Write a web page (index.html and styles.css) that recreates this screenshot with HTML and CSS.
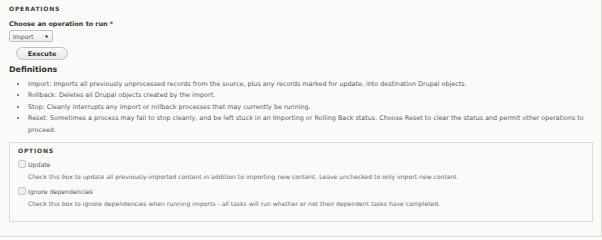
FILE: index.html
```html
<!DOCTYPE html>
<html>
<head>
<meta charset="utf-8">
<link rel="stylesheet" href="styles.css">
</head>
<body>
<div class="page">
  <div class="section-title">Operations</div>
  <div class="form-label">Choose an operation to run <span class="req">*</span></div>
  <div class="select"><span class="select-text">Import</span><span class="arrow">&#9660;</span></div>
  <div class="btn-row"><button class="btn">Execute</button></div>
  <h2 class="defs-title">Definitions</h2>
  <ul class="defs">
    <li>Import: Imports all previously unprocessed records from the source, plus any records marked for update, into destination Drupal objects.</li>
    <li>Rollback: Deletes all Drupal objects created by the import.</li>
    <li>Stop: Cleanly interrupts any import or rollback processes that may currently be running.</li>
    <li>Reset: Sometimes a process may fail to stop cleanly, and be left stuck in an Importing or Rolling Back status. Choose Reset to clear the status and permit other operations to proceed.</li>
  </ul>
  <div class="options">
    <div class="options-title">Options</div>
    <div class="opt">
      <div class="opt-row"><span class="cb"></span><span class="opt-label">Update</span></div>
      <div class="opt-desc">Check this box to update all previously-imported content in addition to importing new content. Leave unchecked to only import new content</div>
    </div>
    <div class="opt">
      <div class="opt-row"><span class="cb"></span><span class="opt-label">Ignore dependencies</span></div>
      <div class="opt-desc">Check this box to ignore dependencies when running imports - all tasks will run whether or not their dependent tasks have completed.</div>
    </div>
  </div>
</div>
</body>
</html>
```

FILE: styles.css
```css
html, body {
  margin: 0;
  padding: 0;
  background: #ffffff;
}
body {
  font-family: "DejaVu Sans", Verdana, sans-serif;
  color: #555;
}
.page {
  width: 602px;
  height: 237px;
  box-sizing: border-box;
  padding: 4px 9px 0 9px;
  background: #fafaf8;
  border-right: 1px solid #dcdcd8;
  border-bottom: 1px solid #dcdcd8;
  overflow: hidden;
}
.section-title {
  font-size: 6px;
  line-height: 10px;
  font-weight: bold;
  text-transform: uppercase;
  letter-spacing: 0.8px;
  color: #3a3a3a;
}
.form-label {
  margin-top: 5px;
  font-size: 6.4px;
  line-height: 10px;
  font-weight: bold;
  color: #333;
}
.req { color: #e0212a; }
.select {
  margin-top: 1px;
  width: 44px;
  height: 12px;
  box-sizing: border-box;
  border: 1px solid #c4c4c0;
  border-radius: 2px;
  background: linear-gradient(#fdfdfd, #ececea);
  display: flex;
  align-items: center;
  justify-content: space-between;
  padding: 0 4px 0 3px;
  font-size: 6.2px;
  color: #555;
}
.arrow { font-size: 4px; color: #333; }
.btn-row { margin-top: 5px; padding-left: 7px; }
.btn {
  display: block;
  width: 52px;
  height: 13px;
  padding: 0;
  border: 1px solid #c0c0bc;
  border-radius: 7px;
  background: linear-gradient(#fbfbfb, #e8e8e6);
  font-family: "DejaVu Sans", Verdana, sans-serif;
  font-size: 6.4px;
  font-weight: bold;
  color: #333;
}
.defs-title {
  margin: 4px 0 0 0;
  font-size: 7.9px;
  line-height: 12px;
  font-weight: bold;
  color: #333;
}
.defs {
  margin: 3px 0 0 0;
  padding: 0 0 0 19px;
  font-size: 6.4px;
  line-height: 11.4px;
  color: #5a5a66;
}
.defs li { padding: 0; }
.options {
  margin-top: 6px;
  width: 584px;
  height: 80px;
  box-sizing: border-box;
  border: 1px solid #dcdcd8;
  padding: 3px 8px 0 8px;
}
.options-title {
  font-size: 6px;
  line-height: 10px;
  font-weight: bold;
  text-transform: uppercase;
  letter-spacing: 0.8px;
  color: #3a3a3a;
}
.opt-row {
  display: flex;
  align-items: center;
  height: 10px;
  margin-top: 3px;
}
.cb {
  width: 6px;
  height: 6px;
  border: 1px solid #c8c8c8;
  border-radius: 2px;
  background: #f0f0f0;
  margin-right: 2px;
}
.opt-label {
  font-size: 6.2px;
  color: #555;
}
.opt-desc {
  margin-top: 3px;
  padding-left: 10px;
  font-size: 6.1px;
  line-height: 10px;
  color: #6a6a70;
}
.opt + .opt .opt-row { margin-top: 4px; }
```
